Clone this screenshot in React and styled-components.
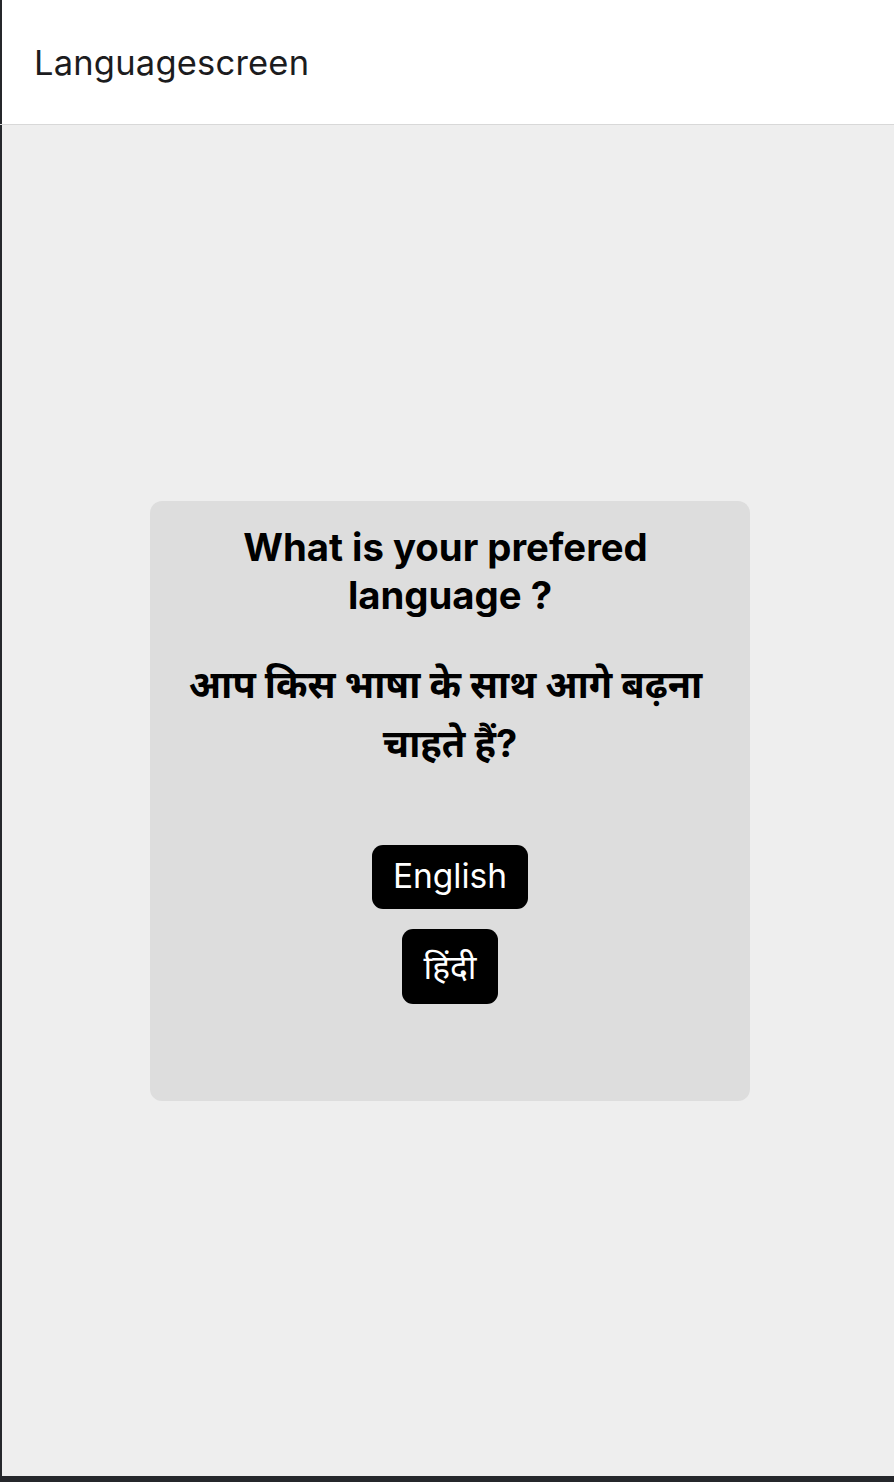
import React from 'react';
import styled, { createGlobalStyle } from 'styled-components';

const GlobalStyle = createGlobalStyle`
  html, body {
    margin: 0;
    padding: 0;
    background: #25272b;
  }
  * {
    box-sizing: border-box;
  }
`;

const Screen = styled.div`
  display: flex;
  flex-direction: column;
  height: 1476px;
  background: #eeeeee;
  box-shadow: inset 2px 0 0 #25272b;
  font-family: Inter, "Noto Sans", "Noto Sans Devanagari", sans-serif;
`;

const Header = styled.div`
  display: flex;
  align-items: center;
  height: 125px;
  padding: 0 0 0 34px;
  background: #ffffff;
  border-bottom: 1px solid #d8d8d8;
  box-shadow: inset 2px 0 0 #25272b;
`;

const Title = styled.div`
  font-size: 34.5px;
  color: #1c1c1e;
  letter-spacing: 0.2px;
`;

const Body = styled.div`
  flex: 1;
  display: flex;
  align-items: center;
  justify-content: center;
  padding-left: 6px;
`;

const Card = styled.div`
  width: 600px;
  height: 600px;
  background: #dddddd;
  border-radius: 12px;
  display: flex;
  flex-direction: column;
  align-items: center;
  padding: 22px 30px 0;
  text-align: center;
`;

const Question = styled.h1`
  margin: 0;
  font-size: 38.3px;
  font-weight: 700;
  line-height: 48px;
  color: #000;
  white-space: break-spaces;
`;

const HindiQuestion = styled.h1`
  margin: 36px 0 0;
  font-size: 38px;
  font-weight: 700;
  line-height: 59px;
  color: #000;
  white-space: break-spaces;
`;

const Options = styled.div`
  display: flex;
  flex-direction: column;
  align-items: center;
  gap: 20px;
  margin-top: 72px;
`;

const LangButton = styled.button`
  border: none;
  background: #000;
  color: #fff;
  font-family: inherit;
  font-size: 33.5px;
  border-radius: 11px;
  padding: ${(p) => (p.$hindi ? '14px 22px 15px' : '11px 21px 13px')};
  cursor: pointer;
`;

export default function App() {
  return (
    <>
      <GlobalStyle />
      <Screen>
        <Header>
          <Title>Languagescreen</Title>
        </Header>
        <Body>
          <Card>
            <Question>What is your prefered language ?</Question>
            <HindiQuestion>आप किस भाषा के साथ आगे बढ़ना चाहते हैं?</HindiQuestion>
            <Options>
              <LangButton>English</LangButton>
              <LangButton $hindi>हिंदी</LangButton>
            </Options>
          </Card>
        </Body>
      </Screen>
    </>
  );
}
